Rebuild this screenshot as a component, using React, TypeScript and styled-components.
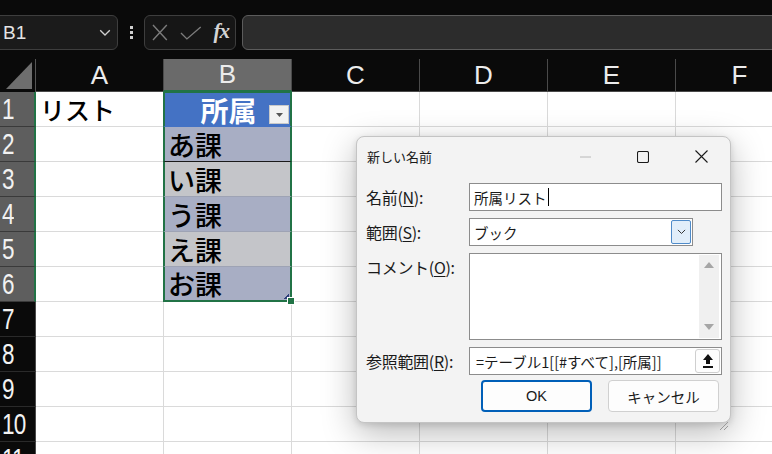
import React from 'react';
import styled, { createGlobalStyle, css } from 'styled-components';

const GlobalStyle = createGlobalStyle`
  html, body {
    margin: 0;
    padding: 0;
    background: #0a0a0a;
  }
`;

const JP = `"Noto Sans CJK JP", "Noto Sans", sans-serif`;
const UI = `"Liberation Sans", Arial, sans-serif`;
const GREEN = '#217346';

const Page = styled.div`
  position: relative;
  width: 772px;
  height: 454px;
  overflow: hidden;
  background: #0a0a0a;
`;

/* ---------- formula bar ---------- */

const TopBar = styled.div`
  display: flex;
  align-items: stretch;
  height: 35px;
  padding: 15px 0 9px;
`;

const NameBox = styled.div`
  display: flex;
  align-items: center;
  justify-content: space-between;
  width: 128px;
  margin-left: -10px;
  padding: 0 6px 0 12px;
  box-sizing: border-box;
  background: #1b1b1b;
  border: 1px solid #3e3e3e;
  border-radius: 6px;
  color: #e4e4e4;
  font-family: ${UI};
  font-size: 19px;
`;

const Dots = styled.div`
  display: flex;
  flex-direction: column;
  justify-content: center;
  align-items: center;
  gap: 2px;
  width: 26px;

  span {
    width: 3px;
    height: 3px;
    background: #d0d0d0;
  }
`;

const FxGroup = styled.div`
  display: flex;
  align-items: center;
  gap: 12px;
  width: 92px;
  padding: 0 6px 0 7px;
  box-sizing: border-box;
  background: #161616;
  border: 1px solid #3e3e3e;
  border-radius: 6px;
`;

const FxLabel = styled.span`
  font-family: "Liberation Serif", "Times New Roman", serif;
  font-style: italic;
  font-weight: bold;
  font-size: 21px;
  color: #d4d4d4;
  letter-spacing: -1px;
  margin-top: -3px;
`;

const FormulaInput = styled.div`
  flex: 1;
  margin-left: 6px;
  margin-right: -10px;
  background: #2c2c2c;
  border: 1px solid #5c5c5c;
  border-radius: 6px;
`;

/* ---------- sheet grid ---------- */

const Sheet = styled.div`
  display: grid;
  grid-template-columns: 36px repeat(6, 128px);
  grid-template-rows: 33px repeat(11, 35px);
  background: #ffffff;
`;

const Corner = styled.div`
  display: flex;
  align-items: flex-end;
  justify-content: flex-end;
  padding: 0 3px 3px 0;
  background: #0a0a0a;
  border-right: 1px solid #555;
`;

const ColHead = styled.div<{ $sel?: boolean }>`
  display: flex;
  align-items: flex-end;
  justify-content: center;
  padding-bottom: 1px;
  box-sizing: border-box;
  background: ${p => (p.$sel ? '#6a6a6a' : '#0a0a0a')};
  border-right: 1px solid #4a4a4a;
  border-bottom: ${p => (p.$sel ? `2px solid ${GREEN}` : '1px solid #4a4a4a')};
  color: #ececec;
  font-family: ${UI};
  font-size: 26px;
  line-height: 30px;
`;

const RowHead = styled.div<{ $sel?: boolean }>`
  display: flex;
  align-items: center;
  padding-left: 2px;
  box-sizing: border-box;
  background: ${p => (p.$sel ? '#5e5e5e' : '#0a0a0a')};
  border-bottom: 1px solid ${p => (p.$sel ? '#3a3a3a' : '#2a2a2a')};
  border-right: ${p => (p.$sel ? `2px solid ${GREEN}` : '1px solid #4a4a4a')};
  color: #f2f2f2;
  font-family: ${UI};
  font-size: 30px;
  line-height: 1;
  overflow: hidden;

  span {
    display: inline-block;
    transform: scaleX(0.75);
    transform-origin: left center;
    letter-spacing: -1px;
  }
`;

const Cell = styled.div`
  display: flex;
  align-items: center;
  padding-left: 4px;
  box-sizing: border-box;
  background: #ffffff;
  border-right: 1px solid #dadada;
  border-bottom: 1px solid #dadada;
  color: #000;
  font-family: ${JP};
  font-size: 25px;
  font-weight: 500;
  line-height: 1;
  white-space: nowrap;
`;

type Edge = 'top' | 'mid' | 'bottom';

const frame = (edge: Edge) => css`
  border-left: 2px solid ${GREEN};
  border-right: 2px solid ${GREEN};
  ${edge === 'top' && `border-top: 2px solid ${GREEN}; margin-top: -1px;`}
  ${edge === 'bottom' && `border-bottom: 2px solid ${GREEN};`}
  margin-left: -1px;
`;

const TableHeadCell = styled(Cell)`
  position: relative;
  justify-content: center;
  padding: 0 0 0 2px;
  background: #4472c4;
  border-bottom: 1px solid #4472c4;
  color: #fff;
  font-weight: bold;
  font-size: 28px;
  ${frame('top')}
`;

const FilterBtn = styled.div`
  position: absolute;
  right: 1px;
  top: 12px;
  width: 20px;
  height: 19px;
  display: flex;
  align-items: center;
  justify-content: center;
  background: #f2f2f2;
  border: 1px solid #c9c9c9;
  box-sizing: border-box;
`;

const TableCell = styled(Cell)<{ $band: boolean; $line: string; $edge: Edge }>`
  position: relative;
  background: ${p => (p.$band ? '#a8aec4' : '#c4c5c9')};
  border-bottom: 1px solid ${p => p.$line};
  font-size: 27px;
  padding-left: 3px;
  ${p => frame(p.$edge)}
`;

const FillHandle = styled.div`
  position: absolute;
  right: -5px;
  bottom: -5px;
  width: 6px;
  height: 6px;
  background: ${GREEN};
  border: 1px solid #fff;
  z-index: 2;
`;

const ResizeMark = styled.div`
  position: absolute;
  right: 1px;
  bottom: 1px;
  width: 5px;
  height: 5px;
  background: linear-gradient(135deg, transparent 50%, #2f3f7a 50%);
`;

/* ---------- dialog ---------- */

const Dialog = styled.div`
  position: absolute;
  left: 356px;
  top: 136px;
  width: 375px;
  height: 287px;
  box-sizing: border-box;
  background: #f3f3f3;
  border: 1px solid #c4c4c4;
  border-radius: 8px;
  box-shadow: 0 10px 34px rgba(0, 0, 0, 0.28), 0 2px 6px rgba(0, 0, 0, 0.12);
  font-family: ${JP};
  color: #1a1a1a;
  display: flex;
  flex-direction: column;
`;

const TitleBar = styled.div`
  display: flex;
  align-items: center;
  height: 39px;
  padding-left: 10px;
  font-size: 13px;
`;

const Title = styled.div`
  flex: 1;
`;

const WinBtn = styled.div`
  width: 58px;
  height: 39px;
  display: flex;
  align-items: center;
  justify-content: center;
`;

const Body = styled.div`
  display: grid;
  grid-template-columns: 103px 253px;
  grid-template-rows: 28px 28px 87px 28px;
  row-gap: 7px;
  padding: 7px 0 0 9px;
`;

const Label = styled.div<{ $top?: boolean }>`
  display: flex;
  align-items: ${p => (p.$top ? 'flex-start' : 'center')};
  padding-top: ${p => (p.$top ? '2px' : '0')};
  font-size: 16px;
  letter-spacing: -0.3px;

  u {
    text-underline-offset: 2px;
  }
`;

const TextBox = styled.div`
  display: flex;
  align-items: center;
  padding-left: 4px;
  box-sizing: border-box;
  background: #fff;
  border: 1px solid #8c8c8c;
  font-size: 14.5px;
  white-space: nowrap;
`;

const Caret = styled.span`
  display: inline-block;
  width: 1px;
  height: 18px;
  background: #000;
  margin-left: 1px;
`;

const SelectBox = styled(TextBox)`
  width: 224px;
  justify-content: space-between;
  padding-right: 1px;
`;

const SelectArrow = styled.div`
  width: 20px;
  height: 24px;
  display: flex;
  align-items: center;
  justify-content: center;
  background: #e1eefa;
  border: 1px solid #4f8bc9;
  border-radius: 2px;
  box-sizing: border-box;
`;

const MemoBox = styled.div`
  display: flex;
  justify-content: flex-end;
  background: #fff;
  border: 1px solid #8c8c8c;
  box-sizing: border-box;
`;

const ScrollTrack = styled.div`
  width: 20px;
  margin: 1px 2px 1px 0;
  display: flex;
  flex-direction: column;
  justify-content: space-between;
  align-items: center;
  padding: 7px 0 8px;
  box-sizing: border-box;
  background: #f0f0f0;
`;

const RefBox = styled(TextBox)`
  justify-content: space-between;
  padding: 0 1px 0 6px;
`;

const RefBtn = styled.div`
  width: 25px;
  height: 24px;
  display: flex;
  align-items: center;
  justify-content: center;
  background: #fdfdfd;
  border: 1px solid #cfcfcf;
  border-radius: 3px;
  box-sizing: border-box;
`;

const ButtonRow = styled.div`
  display: flex;
  justify-content: flex-end;
  gap: 16px;
  padding: 5px 11px 0 0;
`;

const DlgButton = styled.div<{ $primary?: boolean }>`
  width: 111px;
  height: 32px;
  display: flex;
  align-items: center;
  justify-content: center;
  box-sizing: border-box;
  background: #fdfdfd;
  border: ${p => (p.$primary ? '2px solid #005fb8' : '1px solid #d0d0d0')};
  border-radius: 4px;
  font-family: ${p => (p.$primary ? UI : JP)};
  font-size: 14.5px;
`;

const Grip = styled.div`
  position: absolute;
  right: 2px;
  bottom: 2px;
  width: 9px;
  height: 9px;
`;

const Chevron = ({ color, size }: { color: string; size: number }) => (
  <svg width={size} height={size * 0.6} viewBox="0 0 10 6">
    <path d="M1 1 L5 5 L9 1" fill="none" stroke={color} strokeWidth="1.1" />
  </svg>
);

const cols = ['A', 'B', 'C', 'D', 'E', 'F'];
const items = ['あ課', 'い課', 'う課', 'え課', 'お課'];

const App: React.FC = () => {
  const rows = Array.from({ length: 11 }, (_, i) => i + 1);

  return (
    <Page>
      <GlobalStyle />
      <TopBar>
        <NameBox>
          <span>B1</span>
          <Chevron color="#cfcfcf" size={12} />
        </NameBox>
        <Dots>
          <span />
          <span />
          <span />
        </Dots>
        <FxGroup>
          <svg width="16" height="17" viewBox="0 0 16 17">
            <path d="M1 1 L15 16 M15 1 L1 16" stroke="#7c7c7c" strokeWidth="1.4" />
          </svg>
          <svg width="22" height="14" viewBox="0 0 22 14">
            <path d="M1 7 L7 13 L21 1" fill="none" stroke="#7c7c7c" strokeWidth="1.4" />
          </svg>
          <FxLabel>fx</FxLabel>
        </FxGroup>
        <FormulaInput />
      </TopBar>

      <Sheet>
        <Corner>
          <svg width="26" height="27" viewBox="0 0 26 27">
            <path d="M26 0 L26 27 L0 27 Z" fill="#6e6e6e" />
          </svg>
        </Corner>
        {cols.map(c => (
          <ColHead key={c} $sel={c === 'B'}>
            {c}
          </ColHead>
        ))}

        {rows.map(r => (
          <React.Fragment key={r}>
            <RowHead $sel={r <= 6}>
              <span>{r}</span>
            </RowHead>
            <Cell>{r === 1 ? 'リスト' : ''}</Cell>
            {r === 1 && (
              <TableHeadCell>
                所属
                <FilterBtn>
                  <svg width="7" height="4" viewBox="0 0 7 4">
                    <path d="M0 0 L7 0 L3.5 4 Z" fill="#555" />
                  </svg>
                </FilterBtn>
              </TableHeadCell>
            )}
            {r >= 2 && r <= 6 && (
              <TableCell
                $band={r % 2 === 0}
                $line={r === 2 ? '#1a1a1a' : '#9ea3b4'}
                $edge={r === 6 ? 'bottom' : 'mid'}
              >
                {items[r - 2]}
                {r === 6 && (
                  <>
                    <ResizeMark />
                    <FillHandle />
                  </>
                )}
              </TableCell>
            )}
            {r > 6 && <Cell />}
            <Cell />
            <Cell />
            <Cell />
            <Cell />
          </React.Fragment>
        ))}
      </Sheet>

      <Dialog>
        <TitleBar>
          <Title>新しい名前</Title>
          <WinBtn>
            <svg width="11" height="2" viewBox="0 0 11 2">
              <path d="M0 1 H11" stroke="#b8b8b8" strokeWidth="1" />
            </svg>
          </WinBtn>
          <WinBtn>
            <svg width="12" height="12" viewBox="0 0 12 12">
              <rect x="0.5" y="0.5" width="11" height="11" rx="1.5" fill="none" stroke="#1a1a1a" strokeWidth="1.1" />
            </svg>
          </WinBtn>
          <WinBtn>
            <svg width="13" height="13" viewBox="0 0 13 13">
              <path d="M0.5 0.5 L12.5 12.5 M12.5 0.5 L0.5 12.5" stroke="#1a1a1a" strokeWidth="1.1" />
            </svg>
          </WinBtn>
        </TitleBar>

        <Body>
          <Label>
            名前(<u>N</u>):
          </Label>
          <TextBox>
            所属リスト
            <Caret />
          </TextBox>

          <Label>
            範囲(<u>S</u>):
          </Label>
          <SelectBox>
            ブック
            <SelectArrow>
              <Chevron color="#333" size={9} />
            </SelectArrow>
          </SelectBox>

          <Label $top>
            コメント(<u>O</u>):
          </Label>
          <MemoBox>
            <ScrollTrack>
              <svg width="10" height="6" viewBox="0 0 10 6">
                <path d="M5 0 L10 6 L0 6 Z" fill="#a6a6a6" />
              </svg>
              <svg width="10" height="6" viewBox="0 0 10 6">
                <path d="M0 0 L10 0 L5 6 Z" fill="#a6a6a6" />
              </svg>
            </ScrollTrack>
          </MemoBox>

          <Label>
            参照範囲(<u>R</u>):
          </Label>
          <RefBox>
            =テーブル1[[#すべて],[所属]]
            <RefBtn>
              <svg width="10" height="14" viewBox="0 0 10 14">
                <path d="M5 0 L10 6 L7 6 L7 10 L3 10 L3 6 L0 6 Z" fill="#111" />
                <rect x="0" y="12" width="10" height="2" fill="#111" />
              </svg>
            </RefBtn>
          </RefBox>
        </Body>

        <ButtonRow>
          <DlgButton $primary>OK</DlgButton>
          <DlgButton>キャンセル</DlgButton>
        </ButtonRow>

        <Grip>
          <svg width="9" height="9" viewBox="0 0 9 9">
            <path d="M9 1 L1 9 M9 5 L5 9" stroke="#9a9a9a" strokeWidth="1" />
          </svg>
        </Grip>
      </Dialog>
    </Page>
  );
};

export default App;
